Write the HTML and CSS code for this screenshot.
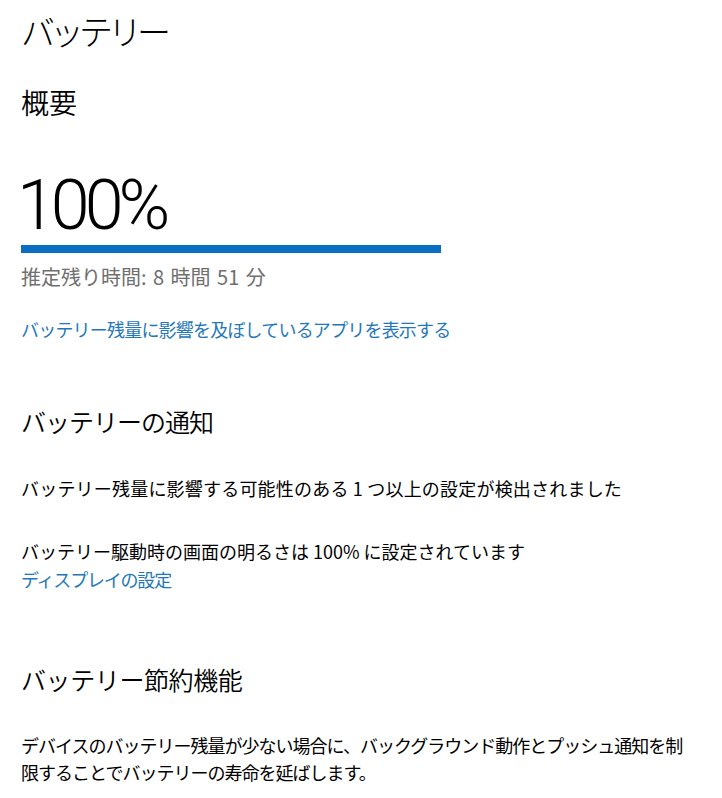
FILE: index.html
```html
<!DOCTYPE html>
<html lang="ja">
<head>
<meta charset="utf-8">
<link rel="stylesheet" href="styles.css">
</head>
<body>
<main class="page">
  <h1 class="title">バッテリー</h1>
  <h2 class="section overview">概要</h2>
  <div class="percent">100%</div>
  <div class="bar"><div class="bar-fill" style="width:100%"></div></div>
  <p class="remaining">推定残り時間: 8 時間 51 分</p>
  <a class="link apps-link" href="#">バッテリー残量に影響を及ぼしているアプリを表示する</a>

  <h2 class="section notify">バッテリーの通知</h2>
  <p class="body-text detected">バッテリー残量に影響する可能性のある 1 つ以上の設定が検出されました</p>
  <div class="brightness">
    <p class="body-text">バッテリー駆動時の画面の明るさは 100% に設定されています</p>
    <a class="link display-link" href="#">ディスプレイの設定</a>
  </div>

  <h2 class="section saver">バッテリー節約機能</h2>
  <p class="body-text saver-text">デバイスのバッテリー残量が少ない場合に、バックグラウンド動作とプッシュ通知を制限することでバッテリーの寿命を延ばします。</p>
</main>
</body>
</html>
```

FILE: styles.css
```css
html, body {
  margin: 0;
  padding: 0;
  background: #ffffff;
}

body {
  font-family: "Noto Sans CJK JP", "Noto Sans", sans-serif;
  color: #000000;
}

.page {
  padding: 11px 0 0 21px;
}

.title {
  margin: 0;
  font-size: 34px;
  line-height: 40px;
  font-weight: 300;
  letter-spacing: -5px;
}

.section {
  margin: 0;
  font-weight: 350;
}

.overview {
  margin-top: 33px;
  font-size: 28px;
  line-height: 36px;
}

.percent {
  margin-top: 47px;
  margin-left: -4px;
  font-family: Roboto, "Liberation Sans", sans-serif;
  font-weight: 300;
  font-size: 70px;
  line-height: 76px;
  letter-spacing: -5px;
}

.bar {
  margin-top: 2px;
  width: 420px;
  height: 8px;
  background: #e6e6e6;
}

.bar-fill {
  height: 100%;
  background: #0a6fc2;
}

.remaining {
  margin: 10px 0 0;
  font-size: 20px;
  line-height: 28px;
  color: #6f6f6f;
  word-spacing: 2px;
}

.link {
  display: block;
  color: #1f78b8;
  text-decoration: none;
}

.apps-link {
  margin-top: 24px;
  font-size: 18px;
  line-height: 28px;
  letter-spacing: -0.8px;
}

.notify {
  margin-top: 61px;
  font-size: 25px;
  line-height: 34px;
  letter-spacing: -1px;
}

.body-text {
  margin: 0;
  font-size: 18px;
}

.detected {
  margin-top: 37px;
  line-height: 26px;
  letter-spacing: 0.2px;
}

.brightness {
  margin-top: 36px;
  line-height: 28px;
}

.brightness .body-text {
  line-height: 28px;
}

.display-link {
  font-size: 18px;
  line-height: 28px;
  letter-spacing: -1.2px;
}

.saver {
  margin-top: 69px;
  font-size: 25px;
  line-height: 34px;
  letter-spacing: -0.4px;
}

.saver-text {
  margin-top: 36px;
  max-width: 672px;
  line-height: 27px;
  letter-spacing: -1px;
}
```
